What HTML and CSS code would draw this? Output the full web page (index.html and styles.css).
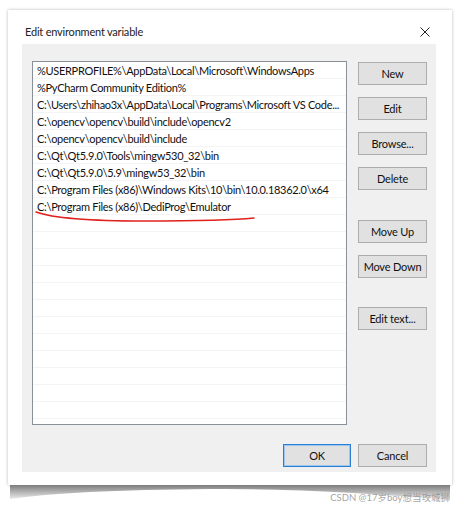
FILE: index.html
```html
<!DOCTYPE html>
<html>
<head>
<meta charset="utf-8">
<link rel="stylesheet" href="styles.css">
</head>
<body>
<div class="dialog">
  <div class="titlebar">
    <span class="title">Edit environment variable</span>
    <svg class="close" width="10" height="10" viewBox="0 0 10 10"><path d="M0.5 0.5 L9.5 9.5 M9.5 0.5 L0.5 9.5" stroke="#222" stroke-width="1" fill="none"/></svg>
  </div>
  <div class="panel">
    <div class="main">
      <div class="list">
        <div class="row">%USERPROFILE%\AppData\Local\Microsoft\WindowsApps</div>
        <div class="row">%PyCharm Community Edition%</div>
        <div class="row">C:\Users\zhihao3x\AppData\Local\Programs\Microsoft VS Code...</div>
        <div class="row">C:\opencv\opencv\build\include\opencv2</div>
        <div class="row">C:\opencv\opencv\build\include</div>
        <div class="row">C:\Qt\Qt5.9.0\Tools\mingw530_32\bin</div>
        <div class="row">C:\Qt\Qt5.9.0\5.9\mingw53_32\bin</div>
        <div class="row">C:\Program Files (x86)\Windows Kits\10\bin\10.0.18362.0\x64</div>
        <div class="row mark">C:\Program Files (x86)\DediProg\Emulator
          <svg class="scribble" width="222" height="14" viewBox="0 0 222 14"><path d="M1 2 C 20 9, 60 11, 110 11 S 200 10, 219 8" stroke="#e0201c" stroke-width="1.4" fill="none" stroke-linecap="round"/></svg>
        </div>
        <div class="row"></div><div class="row"></div><div class="row"></div><div class="row"></div>
        <div class="row"></div><div class="row"></div><div class="row"></div><div class="row"></div>
        <div class="row"></div><div class="row"></div><div class="row"></div><div class="row"></div>
      </div>
      <div class="buttons">
        <button class="btn">New</button>
        <button class="btn">Edit</button>
        <button class="btn">Browse...</button>
        <button class="btn">Delete</button>
        <button class="btn gap-a">Move Up</button>
        <button class="btn">Move Down</button>
        <button class="btn gap-b">Edit text...</button>
      </div>
    </div>
    <div class="footer">
      <button class="btn ok">OK</button>
      <button class="btn">Cancel</button>
    </div>
  </div>
</div>
<div class="under">
  <div class="curl"></div>
  <div class="watermark">CSDN @17岁boy想当攻城狮</div>
</div>
</body>
</html>
```
FILE: styles.css
```css
html, body {
  margin: 0;
  padding: 0;
  background: #ffffff;
}
body {
  font-family: "Lato", "Noto Sans CJK SC", sans-serif;
  font-size: 11px;
  letter-spacing: -0.2px;
  color: #111;
  min-height: 509px;
  padding-top: 10px;
  box-sizing: border-box;
}
.dialog {
  margin: 0 0 0 8px;
  width: 444px;
  height: 475px;
  background: #fff;
  box-shadow: 0 0 3px rgba(0,0,0,0.28);
  display: flex;
  flex-direction: column;
}
.titlebar {
  height: 34px;
  display: flex;
  align-items: center;
  justify-content: space-between;
  padding: 8px 22px 0 17px;
  box-sizing: border-box;
}
.title {
  font-size: 11px;
  color: #222;
}
.close {
  display: block;
  margin-top: 1px;
}
.panel {
  margin: 0 16px 0 14px;
  height: 428px;
  background: #f0f0f0;
  padding: 17px 9px 5px 10px;
  box-sizing: border-box;
  display: flex;
  flex-direction: column;
}
.main {
  display: flex;
  gap: 11px;
}
.list {
  width: 315px;
  height: 364px;
  box-sizing: border-box;
  border: 1px solid #8a9099;
  background: #fff;
  overflow: hidden;
}
.row {
  position: relative;
  height: 17px;
  line-height: 15px;
  padding-top: 1px;
  border-bottom: 1px solid #f4f4f4;
  box-sizing: border-box;
  padding-left: 4px;
  white-space: nowrap;
  overflow: hidden;
  letter-spacing: -0.3px;
}
.row.mark {
  overflow: visible;
}
.scribble {
  position: absolute;
  left: 2px;
  top: 12px;
}
.buttons {
  display: flex;
  flex-direction: column;
  gap: 12px;
  padding-top: 1px;
}
.btn {
  width: 69px;
  height: 23px;
  background: #e1e1e1;
  border: 1px solid #adadad;
  font-family: "Lato", sans-serif;
  font-size: 11px;
  letter-spacing: -0.2px;
  color: #111;
  padding: 0;
  margin: 0;
}
.gap-a { margin-top: 18px; }
.gap-b { margin-top: 17px; }
.footer {
  display: flex;
  justify-content: flex-end;
  gap: 7px;
  margin-top: 19px;
}
.ok {
  width: 68px;
  border: 1px solid #2a7fd4;
  box-shadow: inset 0 0 0 1px #9cc6ee;
}
.under {
  position: relative;
  margin-left: 10px;
  width: 442px;
  height: 16px;
}
.curl {
  height: 15px;
  background: linear-gradient(to bottom, #7d7d7d, rgba(210,210,210,0.3));
  clip-path: path('M0 0 H440 V15 Q300 3 200 4 Q60 5 0 14 Z');
}
.watermark {
  position: absolute;
  right: 2px;
  top: 5px;
  font-size: 9.5px;
  letter-spacing: 0;
  color: rgba(140,140,140,0.8);
}
```
